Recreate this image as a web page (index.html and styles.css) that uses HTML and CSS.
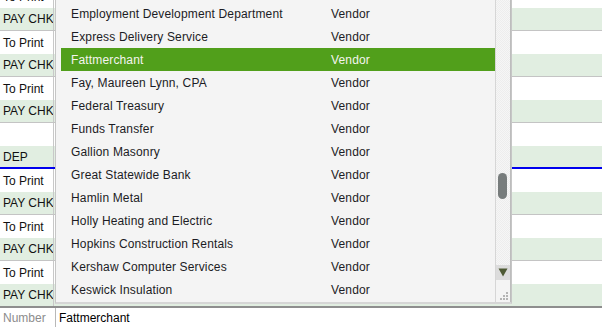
FILE: index.html
```html
<!DOCTYPE html>
<html>
<head>
<meta charset="utf-8">
<link rel="stylesheet" href="styles.css">
</head>
<body>
<div class="sheet">
  <div class="rows">
    <div class="row w"><div class="c1">To Print</div><div class="c2"></div></div>
    <div class="row g"><div class="c1">PAY CHK</div><div class="c2"></div></div>
    <div class="row w"><div class="c1">To Print</div><div class="c2"></div></div>
    <div class="row g"><div class="c1">PAY CHK</div><div class="c2"></div></div>
    <div class="row w"><div class="c1">To Print</div><div class="c2"></div></div>
    <div class="row g"><div class="c1">PAY CHK</div><div class="c2"></div></div>
    <div class="row w"><div class="c1"></div><div class="c2"></div></div>
    <div class="row g dep"><div class="c1">DEP</div><div class="c2"></div></div>
    <div class="row w"><div class="c1">To Print</div><div class="c2"></div></div>
    <div class="row g"><div class="c1">PAY CHK</div><div class="c2"></div></div>
    <div class="row w"><div class="c1">To Print</div><div class="c2"></div></div>
    <div class="row g"><div class="c1">PAY CHK</div><div class="c2"></div></div>
    <div class="row w"><div class="c1">To Print</div><div class="c2"></div></div>
    <div class="row g last"><div class="c1">PAY CHK</div><div class="c2"></div></div>
  </div>
  <div class="footer">
    <div class="f1">Number</div>
    <div class="f2">Fattmerchant</div>
  </div>

  <div class="popup">
    <div class="list">
      <div class="item"><span class="name">Employment Development Department</span><span class="type">Vendor</span></div>
      <div class="item"><span class="name">Express Delivery Service</span><span class="type">Vendor</span></div>
      <div class="item sel"><span class="name">Fattmerchant</span><span class="type">Vendor</span></div>
      <div class="item"><span class="name">Fay, Maureen Lynn, CPA</span><span class="type">Vendor</span></div>
      <div class="item"><span class="name">Federal Treasury</span><span class="type">Vendor</span></div>
      <div class="item"><span class="name">Funds Transfer</span><span class="type">Vendor</span></div>
      <div class="item"><span class="name">Gallion Masonry</span><span class="type">Vendor</span></div>
      <div class="item"><span class="name">Great Statewide Bank</span><span class="type">Vendor</span></div>
      <div class="item"><span class="name">Hamlin Metal</span><span class="type">Vendor</span></div>
      <div class="item"><span class="name">Holly Heating and Electric</span><span class="type">Vendor</span></div>
      <div class="item"><span class="name">Hopkins Construction Rentals</span><span class="type">Vendor</span></div>
      <div class="item"><span class="name">Kershaw Computer Services</span><span class="type">Vendor</span></div>
      <div class="item"><span class="name">Keswick Insulation</span><span class="type">Vendor</span></div>
    </div>
    <div class="scroll">
      <div class="track"><div class="thumb"></div></div>
      <div class="down">
        <svg width="10" height="9" viewBox="0 0 10 9"><polygon points="0.5,0.5 9.5,0.5 5,8.5" fill="#4e5a34"/></svg>
      </div>
      <div class="grip">
        <svg width="10" height="10" viewBox="0 0 10 10" fill="#b4b4b4">
          <rect x="7" y="1" width="2" height="2"/>
          <rect x="4" y="4" width="2" height="2"/><rect x="7" y="4" width="2" height="2"/>
          <rect x="1" y="7" width="2" height="2"/><rect x="4" y="7" width="2" height="2"/><rect x="7" y="7" width="2" height="2"/>
        </svg>
      </div>
    </div>
  </div>
</div>
</body>
</html>
```

FILE: styles.css
```css
html, body {
  margin: 0;
  padding: 0;
  background: #ffffff;
}
body {
  width: 602px;
  height: 327px;
  overflow: hidden;
  font-family: "Liberation Sans", Arial, sans-serif;
  font-size: 12px;
  color: #111111;
}
.sheet {
  position: relative;
  width: 602px;
  height: 327px;
  overflow: hidden;
}
.rows {
  margin-top: -15px;
  display: flex;
  flex-direction: column;
}
.row {
  display: flex;
  height: 23px;
  box-sizing: border-box;
}
.row.w { background: #ffffff; }
.row.g { background: #e1eee1; border-bottom: 1px solid #c4c4c4; }
.row.g.dep { border-bottom: 2px solid #0000ee; }
.row.g.last { border-bottom: none; height: 22px; }
.c1 {
  width: 54px;
  box-sizing: border-box;
  border-right: 1px solid #c8c8c8;
  padding-left: 3px;
  white-space: nowrap;
  overflow: hidden;
  display: flex;
  align-items: center;
}
.c2 { flex: 1; }
.footer {
  display: flex;
  height: 21px;
  box-sizing: border-box;
  border-top: 2px solid #8e8e8e;
  background: #ffffff;
}
.f1 {
  width: 56px;
  box-sizing: border-box;
  border-right: 1px solid #b8b8b8;
  padding-left: 3px;
  color: #8c8c8c;
  display: flex;
  align-items: center;
}
.f2 {
  padding-left: 3px;
  display: flex;
  align-items: center;
  color: #000000;
}

/* dropdown popup */
.popup {
  position: absolute;
  left: 55px;
  top: -10px;
  width: 457px;
  height: 314px;
  box-sizing: border-box;
  background: #f4f4f4;
  border: 1px solid #c6c6c6;
  border-bottom: 2px solid #d6d6d6;
  padding-left: 5px;
  display: flex;
}
.list {
  width: 434px;
  padding-top: 11px;
  display: flex;
  flex-direction: column;
}
.item {
  height: 23px;
  display: flex;
  align-items: center;
  padding-left: 10px;
  color: #1c1c24;
  white-space: nowrap;
  letter-spacing: 0.15px;
}
.item.sel {
  background: #519f1b;
  color: #f4f4f0;
}
.name { width: 260px; }
.scroll {
  width: 16px;
  box-sizing: border-box;
  border-left: 1px solid #d6d6d6;
  border-right: 1px solid #bdbdbd;
  display: flex;
  flex-direction: column;
}
.track {
  height: 274px;
  position: relative;
  background-color: #f2f2f2;
  background-image: repeating-conic-gradient(#ededed 0 25%, #f6f6f6 0 50%);
  background-size: 2px 2px;
}
.thumb {
  position: absolute;
  left: 2px;
  top: 182px;
  width: 9px;
  height: 26px;
  border-radius: 5px;
  background: #777c7c;
}
.down {
  height: 15px;
  background: #dcdcdc;
  display: flex;
  align-items: center;
  justify-content: center;
}
.grip {
  flex: 1;
  display: flex;
  align-items: flex-end;
  justify-content: flex-end;
  background: #f4f4f4;
}
.grip svg { display: block; margin-right: 1px; margin-bottom: 1px; }
```
